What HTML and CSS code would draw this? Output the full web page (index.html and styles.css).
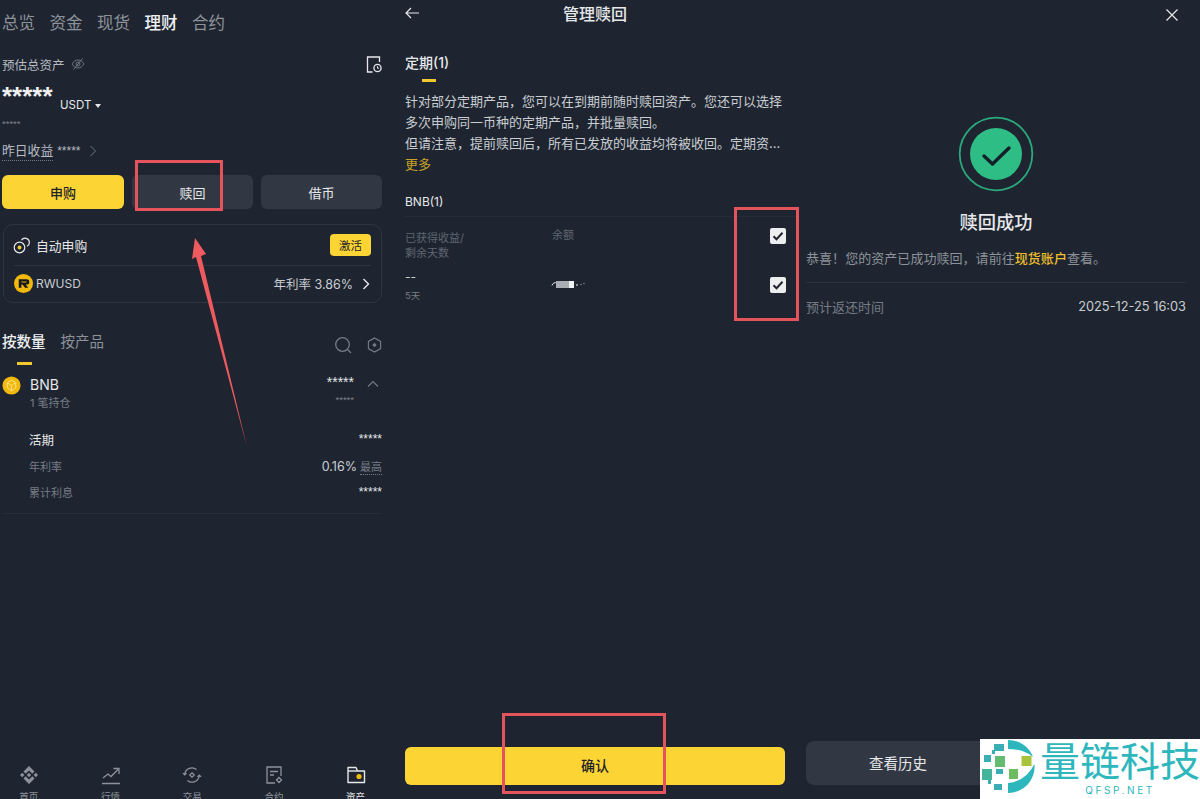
FILE: index.html
```html
<!DOCTYPE html>
<html lang="zh">
<head>
    <title>管理赎回</title>
    <link rel="stylesheet" href="styles.css">
</head>
<body>
<div class="page">

    <!-- 资产页 -->
    <section class="panel panel-assets">
        <nav class="top-tabs">
            <span>总览</span><span>资金</span><span>现货</span><span class="active">理财</span><span>合约</span>
        </nav>

        <div class="total-row">
            <span class="total-label">预估总资产</span>
            <svg class="eye" viewBox="0 0 14 14" fill="none" stroke="#6f7680" stroke-width="1"><path d="M1 7c1.600-2.600 3.600-4 6-4s4.400 1.400 6 4c-1.600 2.600-3.600 4-6 4s-4.400-1.400-6-4z"/><circle cx="7" cy="7" r="2"/><path d="M2.500 12.500l9-11"/></svg>
            <svg class="history" viewBox="0 0 16 17" fill="none" stroke="#e6e8ea" stroke-width="1.300"><path d="M13.500 6V1H1.500v15h5"/><circle cx="11.500" cy="12" r="3.600"/><path d="M11.500 10.200v2h1.600" stroke-width="1"/></svg>
        </div>

        <div class="balance-row">
            <span class="stars-big">*****</span>
            <span class="unit">USDT</span>
            <span class="caret"></span>
        </div>
        <div class="stars-small">*****</div>

        <div class="yesterday">
            <span class="dotted">昨日收益</span>
            <span class="stars-mid">*****</span>
            <svg class="chev" viewBox="0 0 8 12" fill="none" stroke="#6f7680" stroke-width="1"><path d="M1.500 1l5 5-5 5"/></svg>
        </div>

        <div class="action-row">
            <div class="btn btn-yellow">申购</div>
            <div class="btn btn-gray">赎回</div>
            <div class="btn btn-gray">借币</div>
        </div>

        <div class="auto-card">
            <div class="auto-head">
                <svg class="auto-icon" viewBox="0 0 18 18" fill="none" stroke="#e6e8ea" stroke-width="1.200"><circle cx="6.500" cy="11.500" r="5.300"/><circle cx="6.500" cy="11.500" r="1.900" fill="#f0c92f" stroke="none"/><path d="M8.500 4.200a4.300 4.300 0 0 1 7.900 2.300c0 1.700-1 3.100-2.400 3.800"/></svg>
                <span class="auto-title">自动申购</span>
                <span class="activate">激活</span>
            </div>
            <div class="auto-body">
                <svg class="coin-rw" viewBox="0 0 18 18"><circle cx="9" cy="9" r="9" fill="#f0b90b"/><path d="M4.500 5h7.500a2.500 2.500 0 0 1 0 5h-1l2.500 3h-3L8 10H7v3H4.500zM7 7v1h4.500a.5 .5 0 0 0 0-1z" fill="#15181d"/></svg>
                <span class="rw-name">RWUSD</span>
                <span class="rw-rate">年利率 3.86%</span>
                <svg class="chev-bright" viewBox="0 0 8 12" fill="none" stroke="#e6e8ea" stroke-width="1.400"><path d="M1.500 1l5 5-5 5"/></svg>
            </div>
        </div>

        <div class="sub-tabs">
            <span class="active">按数量</span>
            <span>按产品</span>
            <svg class="search" viewBox="0 0 18 18" fill="none" stroke="#767c86" stroke-width="1.300"><circle cx="8.500" cy="8.500" r="6.800"/><path d="M13.500 13.500l3.500 3.500"/></svg>
            <svg class="hex" viewBox="0 0 16 17" fill="none" stroke="#767c86" stroke-width="1.200"><path d="M8 1l6.500 3.700v7.600L8 16l-6.500-3.700V4.700z"/><path d="M8 6.200l2.300 2.300L8 10.800 5.700 8.500z" fill="#767c86" stroke="none"/></svg>
        </div>
        <div class="sub-tab-bar"></div>

        <div class="coin-row">
            <svg class="coin-bnb" viewBox="0 0 20 20"><circle cx="10" cy="10" r="9.500" fill="#f0b90b"/><path d="M10 4.500l4.500 2.500v5.500L10 15.500l-4.500-3V7z" fill="none" stroke="#fbe28c" stroke-width="1"/><path d="M5.500 7l4.500 3 4.500-3M10 10v5.500" fill="none" stroke="#fbe28c" stroke-width="1"/></svg>
            <div class="coin-name">
                <div class="coin-symbol">BNB</div>
                <div class="coin-sub">1 笔持仓</div>
            </div>
            <div class="coin-amount">
                <div class="stars-mid light">*****</div>
                <div class="stars-tiny">*****</div>
            </div>
            <svg class="chev-up" viewBox="0 0 12 8" fill="none" stroke="#767c86" stroke-width="1.100"><path d="M1 6.500l5-5 5 5"/></svg>
        </div>

        <div class="detail">
            <div class="detail-row detail-head"><span>活期</span><span class="stars-mid light">*****</span></div>
            <div class="detail-row"><span class="muted">年利率</span><span class="rate"><b>0.16%</b> <em>最高</em></span></div>
            <div class="detail-row"><span class="muted">累计利息</span><span class="stars-mid light">*****</span></div>
        </div>

        <nav class="bottom-nav">
            <div class="nav-item">
                <svg viewBox="0 0 20 20" fill="#8d929a"><path d="M10 1l5.500 5.500-2.200 2.200L10 5.400 6.700 8.700 4.500 6.500zM3.200 7.800L5.400 10l-2.200 2.200L1 10zM16.800 7.800L19 10l-2.200 2.200L14.600 10zM10 7.800l2.200 2.200-2.200 2.200L7.800 10zM10 19l-5.500-5.500 2.200-2.200 3.300 3.300 3.300-3.300 2.200 2.200z"/></svg>
                <span>首页</span>
            </div>
            <div class="nav-item">
                <svg viewBox="0 0 20 20" fill="none" stroke="#8d929a" stroke-width="1.300"><path d="M2 13l5-4 3 2.500L17 4.500M12.500 3.500H18V9M1 18.500h18"/></svg>
                <span>行情</span>
            </div>
            <div class="nav-item">
                <svg viewBox="0 0 22 20" fill="none" stroke="#8d929a" stroke-width="1.300"><path d="M3 9a8 8 0 0 1 13-5M19 11a8 8 0 0 1-13 5M1 8l2 2 2-2M17 12l2-2 2 2"/><path d="M11 7.500l2.500 2.500-2.500 2.500L8.500 10z"/></svg>
                <span>交易</span>
            </div>
            <div class="nav-item">
                <svg viewBox="0 0 20 20" fill="none" stroke="#8d929a" stroke-width="1.300"><path d="M17 11V2H3v16h8M6 6.500h8M6 10h4"/><path d="M15 12.500l2.500 2.500-2.500 2.500-2.500-2.500z"/></svg>
                <span>合约</span>
            </div>
            <div class="nav-item nav-active">
                <svg viewBox="0 0 20 20" fill="none" stroke="#e6e8ea" stroke-width="1.400" stroke-linejoin="round"><path d="M2 17.500V2.500h8l1.500 3.500H18.500v11.500z"/><path d="M2 6h9.500"/><circle cx="13" cy="11.500" r="2.600" fill="#f0b90b" stroke="none"/></svg>
                <span>资产</span>
            </div>
        </nav>
    </section>

    <!-- 管理赎回 -->
    <section class="panel panel-manage">
        <header class="manage-head">
            <svg class="back" viewBox="0 0 14 12" fill="none" stroke="#e6e8ea" stroke-width="1.200"><path d="M14 6H1M6 1L1 6l5 5"/></svg>
            <h1>管理赎回</h1>
        </header>

        <div class="fixed-tab">定期(1)</div>
        <div class="fixed-bar"></div>

        <div class="intro">
            <p>针对部分定期产品，您可以在到期前随时赎回资产。您还可以选择</p>
            <p>多次申购同一币种的定期产品，并批量赎回。</p>
            <p>但请注意，提前赎回后，所有已发放的收益均将被收回。定期资...</p>
            <p class="more">更多</p>
        </div>

        <div class="group-title">BNB(1)</div>

        <div class="redeem-table">
            <div class="cell-earn muted-small">已获得收益/<br>剩余天数</div>
            <div class="cell-bal muted-small">余额</div>
            <div class="check"><svg viewBox="0 0 16 16" fill="none" stroke="#1e2530" stroke-width="2"><path d="M3.500 8.300l3 3 6-6.500"/></svg></div>
            <div class="cell-earn earn-value">--<small>5天</small></div>
            <div class="cell-bal">
                <svg class="smudge" viewBox="0 0 36 10"><path d="M1 6.500a3.500 3.500 0 0 1 5-2.500" fill="none" stroke="#e6e8ea" stroke-width="1"/><rect x="5" y="2" width="13" height="7" fill="#a9aeb5"/><rect x="18" y="2" width="5" height="7" fill="#f0f1f2"/><circle cx="26" cy="6" r="1" fill="#a9aeb5"/><circle cx="30" cy="5.500" r=".8" fill="#767c86"/><circle cx="33" cy="4.500" r=".8" fill="#767c86"/></svg>
            </div>
            <div class="check check-second"><svg viewBox="0 0 16 16" fill="none" stroke="#1e2530" stroke-width="2"><path d="M3.500 8.300l3 3 6-6.500"/></svg></div>
        </div>

        <div class="btn btn-yellow btn-confirm">确认</div>
    </section>

    <!-- 赎回成功 -->
    <section class="panel panel-done">
        <div class="close-row">
            <svg viewBox="0 0 12 12" fill="none" stroke="#e6e8ea" stroke-width="1.200"><path d="M.5 .5l11 11M11.500 .5l-11 11"/></svg>
        </div>
        <svg class="success" viewBox="0 0 76 76" fill="none">
            <circle cx="38" cy="38" r="36.300" stroke="#2aa97c" stroke-width="1.800"/>
            <circle cx="38" cy="38" r="26" fill="#2ebd85"/>
            <path d="M26 40l8.500 8L51 32" stroke="#15202a" stroke-width="3.400" stroke-linecap="round" stroke-linejoin="round"/>
        </svg>
        <h2>赎回成功</h2>
        <p class="done-text">恭喜！您的资产已成功赎回，请前往<strong>现货账户</strong>查看。</p>
        <div class="done-row">
            <span>预计返还时间</span>
            <span class="done-time">2025-12-25 16:03</span>
        </div>
        <div class="btn btn-history">查看历史</div>
    </section>

    <!-- 标注 -->
    <div class="mark mark-redeem"></div>
    <div class="mark mark-checks"></div>
    <div class="mark mark-confirm"></div>
    <svg class="arrow" viewBox="0 0 60 215"><polygon points="5,3 16,19 11,21 57,212 6,22 2,24" fill="#ef5a5f"/></svg>

    <!-- 水印 -->
    <div class="logo">
        <svg class="logo-mark" viewBox="0 0 60 60">
            <path d="M28 1a26.500 26.500 0 0 1 25 17Q44 10 28 10z" fill="#2db7bd"/>
            <path d="M54.500 25A26.500 26.500 0 0 1 28 54V44Q46 42 54.500 25z" fill="#2db7bd"/>
            <rect x="14" y="5" width="10" height="7" fill="#3aaeb4"/>
            <rect x="12" y="11" width="3" height="4" fill="#3aaeb4"/>
            <rect x="4" y="16" width="7" height="7" fill="#3aaeb4"/>
            <rect x="15" y="17" width="10" height="11" fill="#62bd72"/>
            <rect x="41.500" y="17" width="10" height="10" fill="#a9c43c"/>
            <rect x="2" y="30" width="10" height="11" fill="#44b59c"/>
            <rect x="16" y="30" width="7" height="5" fill="#3aaeb4"/>
            <rect x="29" y="30" width="9" height="10" fill="#6ebc62"/>
            <rect x="8" y="41" width="3" height="4" fill="#3aaeb4"/>
            <rect x="14" y="45" width="8" height="6" fill="#3aaeb4"/>
        </svg>
        <div class="logo-text">
            <div class="logo-cn">量链科技</div>
            <div class="logo-en">QFSP.NET</div>
        </div>
    </div>

</div>
</body>
</html>
```

FILE: styles.css
```css
* {
    box-sizing: border-box;
}
html, body {
    margin: 0;
    padding: 0;
    background-color: #1e2530;
}
body {
    font-family: "Inter", "Noto Sans CJK SC", sans-serif;
    color: #e6e8ea;
}
p, h1, h2 {
    margin: 0;
    font-weight: normal;
}
svg {
    display: block;
    flex: none;
}
.page {
    position: relative;
    display: grid;
    grid-template-columns: 395px 405px 400px;
    width: 1200px;
    height: 799px;
    overflow: hidden;
}
.panel {
    display: flex;
    flex-direction: column;
    height: 799px;
}

/* buttons */
.btn {
    display: flex;
    align-items: center;
    justify-content: center;
    font-size: 13px;
    border-radius: 6px;
}
.btn-yellow {
    background: #fcd535;
    color: #1e2329;
    font-weight: 500;
}
.btn-gray {
    background: #323843;
    color: #e6e8ea;
}

/* left panel */
.panel-assets {
    padding: 0 13px 0 2px;
}
.top-tabs {
    display: flex;
    gap: 14.500px;
    height: 46px;
    padding-top: 11px;
    font-size: 16.500px;
    line-height: 24px;
    color: #8d929a;
}
.top-tabs .active {
    color: #eef0f2;
    font-weight: 500;
}
.total-row {
    display: flex;
    align-items: center;
    height: 20px;
    margin-top: 8px;
    font-size: 12.500px;
    color: #b7bcc3;
}
.eye {
    width: 14px;
    height: 14px;
    margin-left: 6px;
}
.history {
    width: 16px;
    height: 17px;
    margin-left: auto;
}
.balance-row {
    display: flex;
    align-items: flex-start;
    height: 32px;
    margin-top: 7px;
}
.stars-big {
    width: 58px;
    font-family: "Liberation Sans", sans-serif;
    font-size: 26px;
    font-weight: bold;
    line-height: 30px;
    color: #eef0f2;
}
.unit {
    margin-top: 16px;
    font-size: 11.500px;
    line-height: 16px;
}
.caret {
    width: 0;
    height: 0;
    margin: 23px 0 0 4px;
    border: 3.500px solid transparent;
    border-top: 4px solid #e6e8ea;
    border-bottom: 0;
}
.stars-small {
    height: 16px;
    margin-top: 3px;
    font-family: "Liberation Sans", sans-serif;
    font-size: 9.500px;
    line-height: 16px;
    color: #7c828b;
}
.yesterday {
    display: flex;
    align-items: center;
    height: 22px;
    margin-top: 8px;
    font-size: 12.800px;
    color: #b7bcc3;
}
.dotted {
    border-bottom: 1px dotted #767c86;
    line-height: 18px;
}
.stars-mid {
    font-family: "Liberation Sans", sans-serif;
    font-size: 12px;
    margin-left: 4px;
    color: #b7bcc3;
}
.stars-mid.light {
    margin-left: 0;
    color: #e6e8ea;
}
.chev {
    width: 8px;
    height: 12px;
    margin-left: 8px;
}
.action-row {
    display: grid;
    grid-template-columns: 122px 121px 121px;
    gap: 8px;
    height: 34px;
    margin-top: 13px;
}
.auto-card {
    height: 79px;
    margin: 15px 0 0 1px;
    padding: 0 10px 0 10px;
    border: 1px solid #2e3540;
    border-radius: 10px;
}
.auto-head {
    display: flex;
    align-items: center;
    height: 41px;
    border-bottom: 1px solid #2e3540;
}
.auto-icon {
    width: 18px;
    height: 18px;
    margin-left: -1px;
}
.auto-title {
    margin-left: 5px;
    font-size: 12.800px;
}
.activate {
    display: flex;
    align-items: center;
    justify-content: center;
    width: 41px;
    height: 22px;
    margin-left: auto;
    background: #fcd535;
    border-radius: 4px;
    font-size: 11.500px;
    color: #1e2329;
}
.auto-body {
    display: flex;
    align-items: center;
    height: 35px;
}
.coin-rw {
    width: 19px;
    height: 19px;
}
.rw-name {
    margin-left: 3px;
    font-size: 12px;
    color: #c9cdd2;
}
.rw-rate {
    margin-left: auto;
    font-size: 12.500px;
    color: #c9cdd2;
}
.chev-bright {
    width: 8px;
    height: 12px;
    margin: 0 1px 0 9px;
}
.sub-tabs {
    display: flex;
    align-items: center;
    height: 26px;
    margin-top: 24px;
    font-size: 14.500px;
    color: #8d929a;
}
.sub-tabs span {
    margin-right: 15px;
}
.sub-tabs .active {
    color: #eef0f2;
    font-weight: 500;
}
.search {
    width: 18px;
    height: 18px;
    margin: 10px 0 0 auto;
}
.hex {
    width: 15px;
    height: 16px;
    margin: 10px 0 0 15px;
}
.sub-tab-bar {
    width: 15px;
    height: 3px;
    margin: 9px 0 0 15px;
    background: #f0c92f;
}
.coin-row {
    display: flex;
    align-items: flex-start;
    height: 47px;
    margin-top: 10px;
}
.coin-bnb {
    width: 19px;
    height: 19px;
    margin-top: 1px;
}
.coin-name {
    margin-left: 9px;
}
.coin-symbol {
    font-size: 14px;
    line-height: 20px;
}
.coin-sub {
    font-size: 11px;
    line-height: 14px;
    margin-top: 1px;
    color: #767c86;
}
.coin-amount {
    margin-left: auto;
    text-align: right;
    line-height: 14px;
}
.coin-amount .stars-mid {
    font-size: 14px;
}
.stars-tiny {
    margin-top: 4px;
    font-family: "Liberation Sans", sans-serif;
    font-size: 9.500px;
    color: #7c828b;
}
.chev-up {
    width: 12px;
    height: 8px;
    margin: 5px 3px 0 13px;
}
.detail {
    height: 88px;
    margin-top: 4px;
    padding-left: 27px;
    border-bottom: 1px solid #262d37;
}
.detail-row {
    display: flex;
    align-items: center;
    justify-content: space-between;
    height: 26px;
    font-size: 11px;
}
.detail-head {
    margin-bottom: 1px;
    font-size: 12.500px;
}
.muted {
    color: #767c86;
}
.rate b {
    font-weight: normal;
    font-size: 12.500px;
    color: #c9cdd2;
}
.rate em {
    font-style: normal;
    color: #767c86;
    border-bottom: 1px dotted #767c86;
}
.bottom-nav {
    flex: none;
    display: grid;
    grid-template-columns: repeat(5, 81.700px);
    height: 43px;
    margin: auto 0 -9px -14px;
}
.nav-item {
    display: flex;
    flex-direction: column;
    align-items: center;
    font-size: 9.500px;
    color: #8d929a;
}
.nav-item svg {
    width: 20px;
    height: 20px;
    margin-bottom: 4px;
}
.nav-active {
    color: #e6e8ea;
}

/* middle panel */
.panel-manage {
    padding: 0 15px 0 10px;
}
.manage-head {
    position: relative;
    display: flex;
    align-items: center;
    justify-content: center;
    height: 26px;
}
.manage-head h1 {
    font-size: 16px;
    font-weight: 500;
}
.back {
    position: absolute;
    left: 0;
    top: 7px;
    width: 14px;
    height: 12px;
}
.fixed-tab {
    margin-top: 28px;
    font-size: 14px;
    line-height: 18px;
    font-weight: 500;
}
.fixed-bar {
    width: 14px;
    height: 3px;
    margin: 7px 0 0 17px;
    background: #f0c92f;
}
.intro {
    margin-top: 9px;
    font-size: 13px;
    line-height: 21px;
    color: #c9cdd2;
    white-space: nowrap;
}
.more {
    color: #c9a227;
}
.group-title {
    height: 24px;
    margin: 18px -15px 0 0;
    font-size: 12px;
    line-height: 18px;
    border-bottom: 1px solid #262d37;
}
.redeem-table {
    display: grid;
    grid-template-columns: 147px 218px 16px;
    grid-template-rows: 40px 40px;
    padding-top: 11px;
}
.muted-small {
    font-size: 11px;
    line-height: 15px;
    color: #5f6670;
}
.cell-earn.muted-small {
    padding-top: 3px;
}
.earn-value {
    padding-top: 1px;
    font-size: 12px;
    line-height: 16px;
    color: #c9cdd2;
}
.earn-value small {
    display: block;
    margin-top: 3px;
    font-size: 9.500px;
    color: #767c86;
}
.smudge {
    width: 36px;
    height: 10px;
    margin: 11px 0 0 -1px;
}
.check {
    width: 16px;
    height: 16px;
    background: #eceef0;
    border-radius: 2px;
}
.check-second {
    margin-top: 9px;
}
.btn-confirm {
    width: 380px;
    height: 38px;
    margin: auto 0 14px;
    padding-bottom: 2px;
    font-size: 14px;
}

/* right panel */
.panel-done {
    align-items: center;
    padding: 0 14px 0 6px;
}
.close-row {
    align-self: flex-end;
    width: 12px;
    height: 12px;
    margin: 9px 8px 0 0;
}
.success {
    width: 76px;
    height: 76px;
    margin-top: 95px;
}
.panel-done h2 {
    margin-top: 17px;
    font-size: 18.300px;
    line-height: 26px;
    font-weight: 500;
}
.done-text {
    align-self: stretch;
    height: 35px;
    margin-top: 13px;
    font-size: 13.050px;
    line-height: 20px;
    color: #8d929a;
    border-bottom: 1px solid #2b323d;
}
.done-text strong {
    font-weight: 500;
    color: #eebf2c;
}
.done-row {
    align-self: stretch;
    display: flex;
    align-items: center;
    justify-content: space-between;
    height: 46px;
    font-size: 13px;
    color: #767c86;
}
.done-time {
    font-size: 12.800px;
    color: #c9cdd2;
}
.btn-history {
    align-self: flex-start;
    width: 200px;
    height: 44px;
    margin-top: auto;
    margin-bottom: 14px;
    padding: 0 16px 2px 0;
    background: #323843;
    border-radius: 8px;
    font-size: 14.500px;
}

/* annotations */
.mark {
    position: absolute;
    border: 3px solid #e5535c;
}
.mark-redeem {
    left: 135px;
    top: 160px;
    width: 88px;
    height: 51px;
}
.mark-checks {
    left: 734px;
    top: 207px;
    width: 65px;
    height: 114px;
}
.mark-confirm {
    left: 502px;
    top: 713px;
    width: 164px;
    height: 81px;
}
.arrow {
    position: absolute;
    left: 190px;
    top: 235px;
    width: 60px;
    height: 215px;
}

/* watermark */
.logo {
    position: absolute;
    left: 980px;
    top: 739px;
    display: flex;
    width: 220px;
    height: 60px;
    background: #fff;
}
.logo-mark {
    width: 60px;
    height: 60px;
}
.logo-text {
    width: 160px;
    text-align: center;
    color: #2db7bd;
}
.logo-cn {
    margin-top: 1px;
    font-size: 40px;
    line-height: 44px;
    white-space: nowrap;
}
.logo-en {
    font-size: 10px;
    line-height: 12px;
    letter-spacing: 2.600px;
}
```
